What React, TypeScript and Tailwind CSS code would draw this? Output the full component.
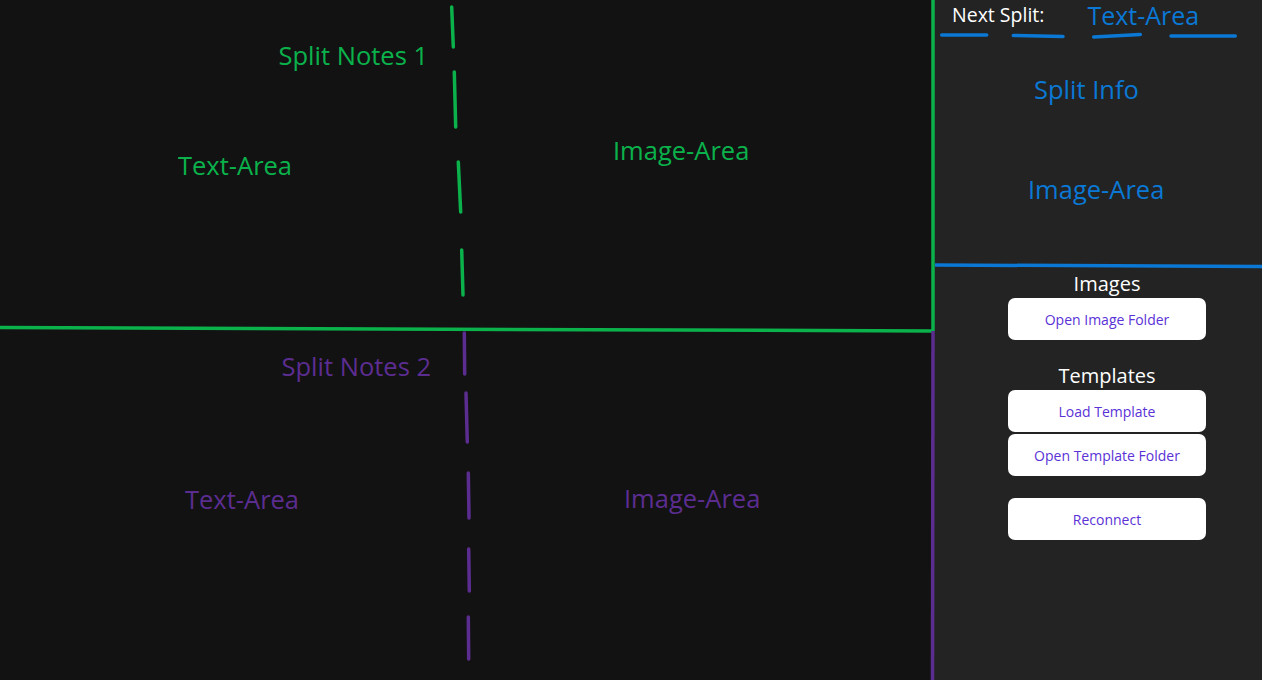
import React from "react";

const green = "#0bb24c";
const purple = "#5c2d91";
const blue = "#0a78d4";

function Strokes() {
  // hand-drawn mockup lines on top of the layout
  const greenDash = [
    [451.7, 7, 453.3, 47],
    [454.3, 72, 455.7, 127],
    [458.3, 162, 460.7, 212],
    [461.7, 250, 463, 295],
  ];
  const purpleDash = [
    [464.3, 333, 464.7, 374],
    [466, 393, 467.3, 442],
    [468.3, 473, 469, 518],
    [468.7, 549, 469.3, 591],
    [468.3, 617, 468.7, 659],
  ];
  const blueDash = [
    [941.7, 35, 986.7, 35],
    [1013.3, 35.5, 1063, 36.5],
    [1093.7, 37, 1140.3, 34.5],
    [1171, 36, 1235.3, 36],
  ];
  return (
    <svg
      className="pointer-events-none absolute inset-0"
      width="1262"
      height="680"
      viewBox="0 0 1262 680"
    >
      <line x1="0" y1="327.5" x2="933" y2="331" stroke={green} strokeWidth="3.5" />
      <line x1="933" y1="0" x2="933" y2="331" stroke={green} strokeWidth="3.5" />
      <line x1="933" y1="331" x2="932.5" y2="680" stroke={purple} strokeWidth="3.5" />
      <line x1="935" y1="265" x2="1262" y2="266.5" stroke={blue} strokeWidth="3.5" />
      {greenDash.map(([a, b, c, d], i) => (
        <line key={"g" + i} x1={a} y1={b} x2={c} y2={d} stroke={green} strokeWidth="3.5" strokeLinecap="round" />
      ))}
      {purpleDash.map(([a, b, c, d], i) => (
        <line key={"p" + i} x1={a} y1={b} x2={c} y2={d} stroke={purple} strokeWidth="3.5" strokeLinecap="round" />
      ))}
      {blueDash.map(([a, b, c, d], i) => (
        <line key={"b" + i} x1={a} y1={b} x2={c} y2={d} stroke={blue} strokeWidth="3.5" strokeLinecap="round" />
      ))}
    </svg>
  );
}

function PanelButton({ label, className = "" }: { label: string; className?: string }) {
  return (
    <button
      className={
        "h-[42px] w-[198px] rounded-[7px] bg-white text-[14px] text-[#5a32d6] " + className
      }
    >
      {label}
    </button>
  );
}

export default function App() {
  return (
    <div className="relative flex h-[680px] w-[1262px] overflow-hidden font-['Open_Sans',sans-serif]">
      {/* Split notes area */}
      <main className="flex w-[933px] flex-col bg-[#121212]">
        <section className="grid h-[328px] grid-cols-[458px_1fr] text-[#0bb24c]">
          <div className="flex flex-col pt-[38px]">
            <div className="self-end pr-[30px] text-[25.5px] leading-[35px]">Split Notes 1</div>
            <div className="ml-[178px] mt-[75px] text-[25.5px] leading-[35px]">Text-Area</div>
          </div>
          <div className="pl-[155px] pt-[133px] text-[25.5px] leading-[35px]">Image-Area</div>
        </section>
        <section className="grid flex-1 grid-cols-[458px_1fr] text-[#5c2d91]">
          <div className="flex flex-col pt-[21px]">
            <div className="self-end pr-[27px] text-[25.5px] leading-[35px]">Split Notes 2</div>
            <div className="ml-[185px] mt-[98px] text-[25.5px] leading-[35px]">Text-Area</div>
          </div>
          <div className="pl-[166px] pt-[153px] text-[25.5px] leading-[35px]">Image-Area</div>
        </section>
      </main>

      {/* Side panel */}
      <aside className="flex flex-1 flex-col bg-[#232323]">
        <div className="flex h-[265px] flex-col">
          <div className="flex h-[30px] items-center pl-[19px]">
            <span className="text-[19.5px] leading-[30px] text-white">Next Split:</span>
            <span className="ml-[43px] text-[25px] leading-[30px] text-[#0a78d4]">Text-Area</span>
          </div>
          <div className="ml-[101px] mt-[42px] text-[25.5px] leading-[35px] text-[#0a78d4]">Split Info</div>
          <div className="ml-[95px] mt-[65px] text-[25.5px] leading-[35px] text-[#0a78d4]">Image-Area</div>
        </div>
        <div className="ml-[75px] flex w-[198px] flex-col items-center">
          <div className="mt-[5px] text-[20px] leading-[28px] text-white">Images</div>
          <PanelButton label="Open Image Folder" />
          <div className="mt-[22px] text-[20px] leading-[28px] text-white">Templates</div>
          <PanelButton label="Load Template" />
          <PanelButton label="Open Template Folder" className="mt-[2px]" />
          <PanelButton label="Reconnect" className="mt-[22px]" />
        </div>
      </aside>

      <Strokes />
    </div>
  );
}
